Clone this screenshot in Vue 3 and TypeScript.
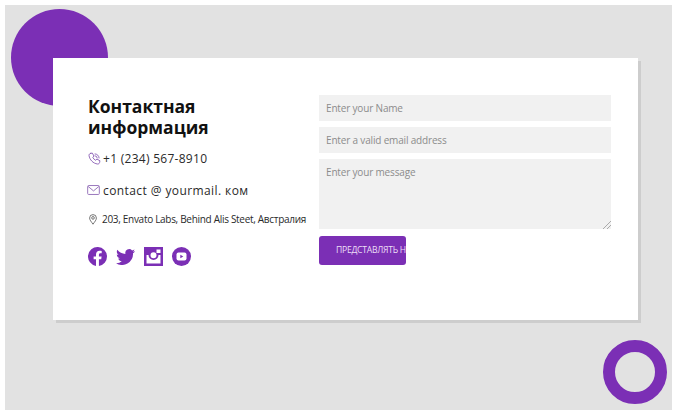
<script setup lang="ts">
const name = 'contact'
</script>

<template>
  <div class="page" :data-name="name">
    <main class="stage">
      <span class="blob"></span>
      <span class="ring"></span>
      <section class="card">
        <div class="info">
          <h1>Контактная информация</h1>
          <p class="line phone">
            <svg width="13" height="13" viewBox="0 0 24 24" fill="none" stroke="#8a5fb5" stroke-width="1.700" stroke-linecap="round" stroke-linejoin="round">
              <path d="M5 2.500 8 2l3 5.500-2.200 2.200c1 2.600 3 4.600 5.500 5.600l2.200-2.200 5.500 3-.5 3c-.3 2-2 3.400-4 3.100C9.500 21 3 14.500 1.900 6.500 1.600 4.500 3 2.800 5 2.500z" />
              <path d="M13 3.500a7.500 7.500 0 0 1 7.500 7.500M13 7a4 4 0 0 1 4 4" />
            </svg>
            <span>+1 (234) 567-8910</span>
          </p>
          <p class="line mail">
            <svg width="13" height="10" viewBox="0 0 14 11" fill="none" stroke="#9a78bd" stroke-width="1.100" stroke-linejoin="round">
              <rect x="0.600" y="0.600" width="12.800" height="9.800" rx="1" />
              <path d="M1 1.500 7 6.500 13 1.500" />
            </svg>
            <span>contact @ yourmail. ком</span>
          </p>
          <p class="line address">
            <svg width="8" height="11" viewBox="0 0 9 12" fill="none" stroke="#555" stroke-width="0.900">
              <path d="M4.500 11.300C2.500 8.500 0.700 6.500 0.700 4.300a3.800 3.800 0 0 1 7.600 0c0 2.200-1.800 4.200-3.800 7z" />
              <circle cx="4.500" cy="4.200" r="1.500" />
            </svg>
            <span>203, Envato Labs, Behind Alis Steet, Австралия</span>
          </p>
          <div class="social">
            <svg width="19" height="19" viewBox="0 0 24 24" fill="#7b2fb5">
              <path d="M24 12a12 12 0 1 0-13.900 11.900v-8.400H7.100V12h3V9.400c0-3 1.800-4.700 4.500-4.700 1.300 0 2.700.2 2.700.2v3h-1.500c-1.500 0-2 .9-2 1.900V12h3.400l-.5 3.500h-2.900v8.400A12 12 0 0 0 24 12z" />
            </svg>
            <svg width="19" height="16" viewBox="0 0 24 20" fill="#7b2fb5">
              <path d="M24 2.400c-.9.400-1.800.7-2.800.8 1-.6 1.800-1.600 2.200-2.700-1 .6-2 1-3.100 1.200A4.900 4.900 0 0 0 11.900 6.200C7.800 6 4.100 4 1.700.9.400 3.200 1.100 6.100 3.200 7.500c-.8 0-1.500-.2-2.200-.6 0 2.400 1.700 4.400 3.900 4.900-.7.200-1.500.2-2.200.1.600 2 2.400 3.400 4.600 3.400A9.900 9.900 0 0 1 0 17.800 14 14 0 0 0 21.500 5.400c1-.7 1.800-1.600 2.500-3z" />
            </svg>
            <svg width="19" height="19" viewBox="0 0 19 19">
              <path fill="#7b2fb5" fill-rule="evenodd" d="M0 0h19v19H0zM2.500 8v8.500h14V8h-2a5 5 0 1 1-10 0zM9.500 5.300a3 3 0 1 0 0 6 3 3 0 0 0 0-6zM12.500 2.500v3.500h4V2.500z" />
            </svg>
            <svg width="19" height="19" viewBox="0 0 19 19">
              <circle cx="9.500" cy="9.500" r="9.500" fill="#7b2fb5" />
              <rect x="4.500" y="5.500" width="10" height="8" rx="2" fill="#fff" />
              <path d="M8.300 7.700v3.600l3-1.800z" fill="#7b2fb5" />
            </svg>
          </div>
        </div>
        <form class="form" @submit.prevent>
          <input type="text" placeholder="Enter your Name" />
          <input type="email" placeholder="Enter a valid email address" />
          <textarea placeholder="Enter your message"></textarea>
          <button type="submit">ПРЕДСТАВЛЯТЬ НЕМЕДЛЕННО</button>
        </form>
      </section>
    </main>
  </div>
</template>

<style>
html, body { margin: 0; background: #fff; }
</style>

<style scoped>
.page {
  width: 677px;
  height: 415px;
  box-sizing: border-box;
  padding: 5px;
  overflow: hidden;
  font-family: "Open Sans", "Noto Sans", sans-serif;
}
.stage {
  position: relative;
  height: 405px;
  background: #e2e2e2;
  padding: 53px 34px 0 48px;
  box-sizing: border-box;
}
.blob {
  position: absolute;
  left: 6px;
  top: 4px;
  width: 97px;
  height: 97px;
  border-radius: 50%;
  background: #7b2fb5;
}
.ring {
  position: absolute;
  left: 598px;
  top: 335px;
  width: 64px;
  height: 64px;
  box-sizing: border-box;
  border: 12px solid #7b2fb5;
  border-radius: 50%;
}
.card {
  position: relative;
  height: 262px;
  box-sizing: border-box;
  background: #fff;
  box-shadow: 3px 3px 0 #cdcdcd;
  padding: 37px 27px 0 35px;
  display: flex;
  gap: 12px;
}
.info { width: 219px; flex: none; }
h1 {
  margin: 1px 0 10px;
  font-size: 17.500px;
  line-height: 21px;
  font-weight: 700;
  color: #111;
  width: 160px;
}
.line {
  display: flex;
  align-items: center;
  margin: 0;
  color: #2a2a2a;
  white-space: nowrap;
}
.line svg { flex: none; }
.phone { height: 20px; gap: 2px; font-size: 12px; letter-spacing: 0.280px; }
.mail { height: 20px; margin-top: 12px; font-size: 12px; letter-spacing: 0.410px; gap: 3px; margin-left: -1px; }
.address { height: 18px; margin-top: 10px; font-size: 10px; letter-spacing: -0.300px; gap: 5px; margin-left: 1px; }
.social {
  display: flex;
  align-items: center;
  gap: 9px;
  margin-top: 19px;
}
.form {
  flex: 1;
  display: flex;
  flex-direction: column;
  gap: 6px;
}
input, textarea {
  display: block;
  width: 100%;
  box-sizing: border-box;
  border: 0;
  outline: 0;
  background: #f1f1f1;
  font: 400 10px/14px "Open Sans", "Noto Sans", sans-serif;
  letter-spacing: -0.170px;
  color: #333;
  padding: 0 7px;
  margin: 0;
}
input::placeholder, textarea::placeholder { color: #8c8c8c; opacity: 1; }
input { height: 26px; }
textarea { height: 70px; padding-top: 6px; resize: vertical; }
textarea::-webkit-resizer {
  background: linear-gradient(135deg, transparent 72%, #aaa 72%, #aaa 76%, transparent 76%, transparent 84%, #aaa 84%, #aaa 88%, transparent 88%);
}
button {
  width: 87px;
  height: 29px;
  margin-top: 1px;
  box-sizing: border-box;
  border: 0;
  border-radius: 3px;
  background: #7b2fb5;
  color: #ecdff5;
  font: 400 8.600px/29px "Open Sans", "Noto Sans", sans-serif;
  letter-spacing: -0.250px;
  text-align: left;
  padding: 0 0 0 17px;
  white-space: nowrap;
  overflow: hidden;
}
</style>
